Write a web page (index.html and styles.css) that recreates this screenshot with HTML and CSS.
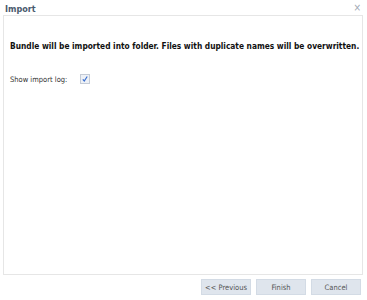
FILE: index.html
```html
<!DOCTYPE html>
<html>
<head>
<meta charset="utf-8">
<link rel="stylesheet" href="styles.css">
</head>
<body>
<div class="dialog">
  <div class="header">
    <span class="title">Import</span>
    <span class="close">×</span>
  </div>
  <div class="panel">
    <p class="message">Bundle will be imported into folder. Files with duplicate names will be overwritten.</p>
    <div class="row">
      <label class="label">Show import log:</label>
      <span class="check">
        <svg width="8" height="8" viewBox="0 0 8 8"><path d="M1.8 4.3 L3.3 6 L6.2 1.5" fill="none" stroke="#3a6fd0" stroke-width="1.2"/></svg>
      </span>
    </div>
  </div>
  <div class="footer">
    <button class="btn">&lt;&lt; Previous</button>
    <button class="btn">Finish</button>
    <button class="btn">Cancel</button>
  </div>
</div>
</body>
</html>
```
FILE: styles.css
```css
html, body {
  margin: 0;
  padding: 0;
  background: #ffffff;
}
.dialog {
  width: 367px;
  height: 300px;
  display: flex;
  flex-direction: column;
  font-family: "DejaVu Sans Condensed", "DejaVu Sans", sans-serif;
  font-stretch: condensed;
  box-sizing: border-box;
}
.header {
  height: 15px;
  display: flex;
  align-items: center;
  justify-content: space-between;
  padding: 0 6px 0 5px;
}
.title {
  font-size: 9px;
  font-weight: bold;
  color: #4a5a6e;
  padding-top: 2px;
}
.close {
  font-size: 10px;
  color: #a0a8b4;
}
.panel {
  margin: 0 4px 0 3px;
  height: 260px;
  border: 1px solid #e6e6e6;
  box-sizing: border-box;
  padding: 0 6px;
}
.message {
  margin: 25px 0 0 0;
  font-size: 8.3px;
  font-weight: bold;
  color: #111;
  white-space: nowrap;
}
.row {
  display: flex;
  align-items: center;
  margin-top: 23px;
}
.label {
  font-size: 7.5px;
  color: #333;
  width: 70px;
}
.check {
  width: 8px;
  height: 8px;
  border: 1px solid #c4cbd6;
  background: #eef1f6;
  display: flex;
  align-items: center;
  justify-content: center;
}
.footer {
  display: flex;
  justify-content: flex-end;
  gap: 5px;
  padding: 4px 6px 0 0;
}
.btn {
  width: 50px;
  height: 16px;
  border: 1px solid #d3dbe5;
  background: #dfe5ed;
  font-family: "DejaVu Sans Condensed", "DejaVu Sans", sans-serif;
  font-stretch: condensed;
  font-size: 7.5px;
  color: #555;
  padding: 0;
}
```
